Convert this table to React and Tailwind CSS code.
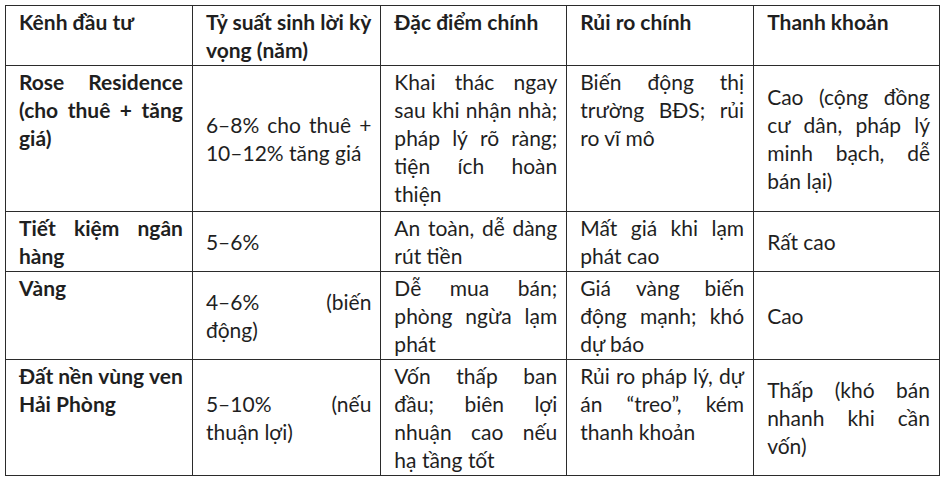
const rows = [
  {
    h: "h-[60px]",
    head: true,
    cells: [
      { lines: ["Kênh đầu tư"] },
      { lines: ["Tỷ suất sinh lời kỳ", "vọng (năm)"] },
      { lines: ["Đặc điểm chính"] },
      { lines: ["Rủi ro chính"] },
      { lines: ["Thanh khoản"] },
    ],
  },
  {
    h: "h-[146px]",
    cells: [
      { lines: ["Rose Residence", "(cho thuê + tăng", "giá)"] },
      { lines: ["6–8% cho thuê +", "10–12% tăng giá"], mid: true },
      {
        lines: [
          "Khai thác ngay",
          "sau khi nhận nhà;",
          "pháp lý rõ ràng;",
          "tiện ích hoàn",
          "thiện",
        ],
      },
      { lines: ["Biến động thị", "trường BĐS; rủi", "ro vĩ mô"] },
      {
        lines: ["Cao (cộng đồng", "cư dân, pháp lý", "minh bạch, dễ", "bán lại)"],
        mid: true,
      },
    ],
  },
  {
    h: "h-[59px]",
    cells: [
      { lines: ["Tiết kiệm ngân", "hàng"] },
      { lines: ["5–6%"], mid: true },
      { lines: ["An toàn, dễ dàng", "rút tiền"] },
      { lines: ["Mất giá khi lạm", "phát cao"] },
      { lines: ["Rất cao"], mid: true },
    ],
  },
  {
    h: "h-[88px]",
    cells: [
      { lines: ["Vàng"] },
      { lines: ["4–6% (biến", "động)"], mid: true },
      { lines: ["Dễ mua bán;", "phòng ngừa lạm", "phát"] },
      { lines: ["Giá vàng biến", "động mạnh; khó", "dự báo"] },
      { lines: ["Cao"], mid: true },
    ],
  },
  {
    h: "h-[115px]",
    cells: [
      { lines: ["Đất nền vùng ven", "Hải Phòng"] },
      { lines: ["5–10% (nếu", "thuận lợi)"], mid: true },
      { lines: ["Vốn thấp ban", "đầu; biên lợi", "nhuận cao nếu", "hạ tầng tốt"] },
      { lines: ["Rủi ro pháp lý, dự", "án “treo”, kém", "thanh khoản"] },
      { lines: ["Thấp (khó bán", "nhanh khi cần", "vốn)"], mid: true },
    ],
  },
];

// justified lines: words pushed apart like Word's justify
function Line({ text, justify }) {
  if (!justify) return <div className="leading-[28px] whitespace-nowrap">{text}</div>;
  return (
    <div className="flex justify-between leading-[28px] whitespace-nowrap">
      {text.split(" ").map((w, i) => (
        <span key={i}>{w}</span>
      ))}
    </div>
  );
}

function Cell({ cell, head, first }) {
  const bold = head || first;
  return (
    <td
      className={
        "border border-[#2b2b2b] pl-[13px] pr-[9px] pt-[2px] pb-[1px] " +
        (cell.mid ? "align-middle " : "align-top ") +
        (bold ? "font-bold" : "font-normal")
      }
    >
      {cell.lines.map((t, i) => (
        <Line key={i} text={t} justify={!head && i < cell.lines.length - 1} />
      ))}
    </td>
  );
}

export default function App() {
  return (
    <div className="w-[940px] h-[480px] bg-white pl-[5px] pt-[5px] text-[#1f1f1f] text-[21px] font-['Lato','Noto_Sans',sans-serif]">
      <table className="table-fixed border-collapse">
        <colgroup>
          <col className="w-[187px]" />
          <col className="w-[185px]" />
          <col className="w-[186px]" />
          <col className="w-[187px]" />
          <col className="w-[186px]" />
        </colgroup>
        <tbody>
          {rows.map((r, ri) => (
            <tr key={ri} className={r.h}>
              {r.cells.map((c, ci) => (
                <Cell key={ci} cell={c} head={r.head} first={ci === 0} />
              ))}
            </tr>
          ))}
        </tbody>
      </table>
    </div>
  );
}
